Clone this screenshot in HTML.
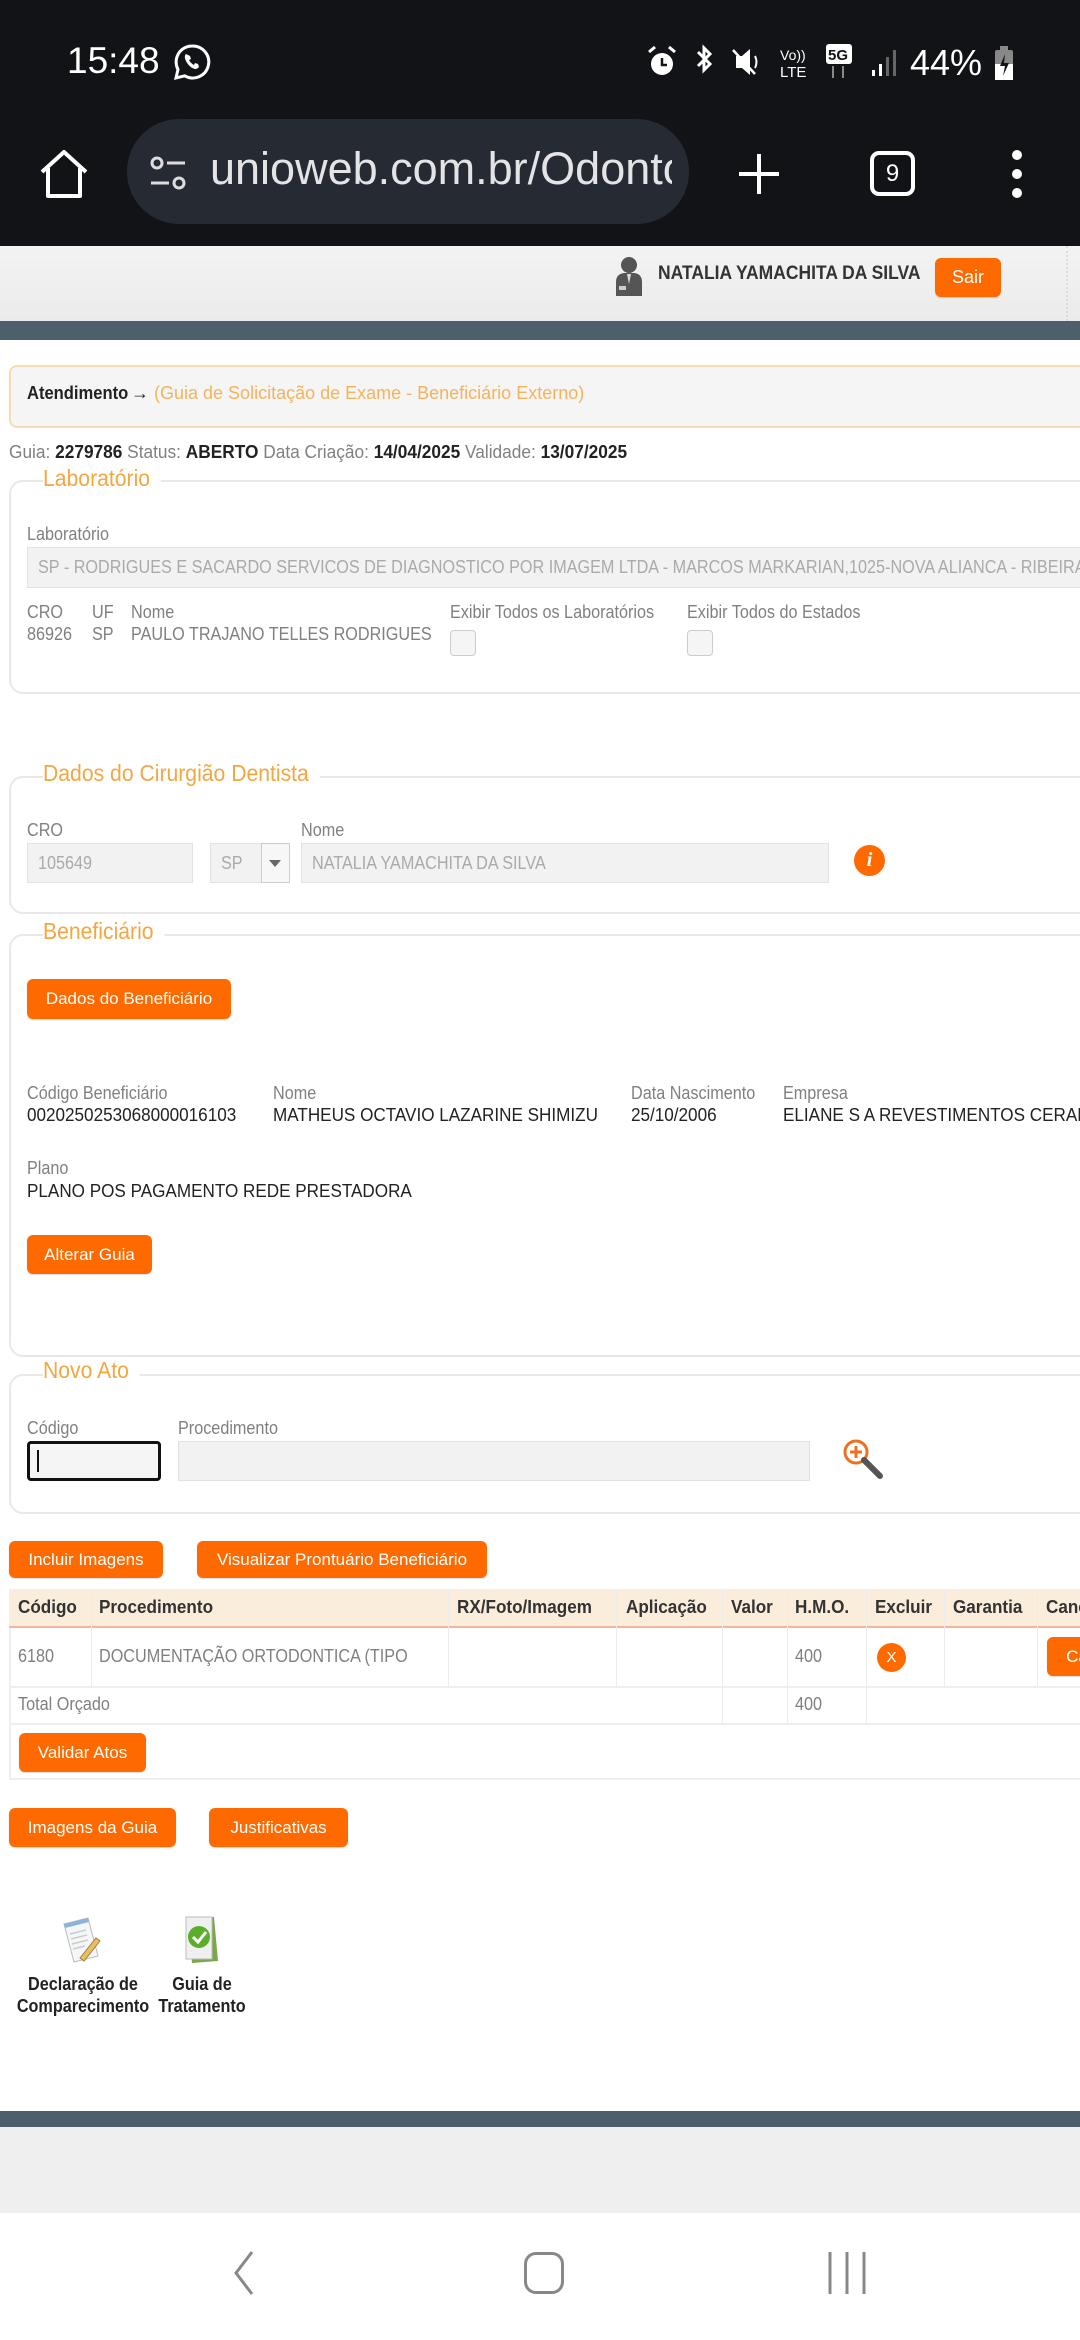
<!DOCTYPE html>
<html><head><meta charset="utf-8">
<style>
*{margin:0;padding:0;box-sizing:border-box}
html,body{overflow:hidden}
body{width:1080px;height:2340px;position:relative;background:#fff;font-family:"Liberation Sans",sans-serif;font-size:18px;color:#808080}
.a{position:absolute;white-space:nowrap;transform-origin:left top}
.l{transform:scaleX(.9)}
.k{transform:scaleX(.95)}
.sb{font-family:"Liberation Sans",sans-serif;color:#fff}
.btn{position:absolute;background:#ff6a00;color:#fff;border-radius:6px;font-size:17px;display:flex;align-items:center;justify-content:center;box-shadow:0 1px 1px rgba(0,0,0,.15);white-space:nowrap}
.fs{position:absolute;left:9px;width:1120px;border:2px solid #e8e8e8;border-radius:14px}
.lg{position:absolute;left:43px;color:#f4a640;font-size:23px;background:#fff;padding:0 12px 0 0;transform:scaleX(.92);transform-origin:left top;white-space:nowrap}
.in{position:absolute;background:#f2f2f2;border:1px solid #e2e2e2;color:#aaa;padding-left:10px;display:flex;align-items:center;white-space:nowrap;overflow:hidden}
.in span{display:inline-block;transform:scaleX(.9);transform-origin:left center}
.d{color:#222}
.th{position:absolute;font-weight:bold;color:#333;top:1597px;white-space:nowrap;transform:scaleX(.95);transform-origin:left top}
.vl{position:absolute;width:1px;background:#ececec}
</style></head><body>
<!-- status + url bar -->
<div class="a" style="left:0;top:0;width:1080px;height:246px;background:#121317"></div>
<div class="a sb" style="left:67px;top:40px;font-size:37px">15:48</div>
<svg class="a" style="left:172px;top:42px" width="40" height="40" viewBox="0 0 40 40"><path d="M20 4a16 16 0 0 0-14 23.5L4 36l8.7-2.2A16 16 0 1 0 20 4z" fill="none" stroke="#fff" stroke-width="3"/><path d="M14 12c-1 1-2 3 0 7s5 7 9 8c2 0 3-1 4-2l-1-3-3-1-1 2c-2-1-4-3-5-5l2-1-1-3z" fill="#fff"/></svg>
<svg class="a" style="left:645px;top:44px" width="340" height="36" viewBox="0 0 340 36">
<circle cx="17" cy="20" r="11" fill="#fff"/><path d="M17 14v7h5" stroke="#121317" stroke-width="2.5" fill="none"/><path d="M4 8l6-5M30 8l-6-5" stroke="#fff" stroke-width="3"/>
<path d="M53 8l12 12-6 6V4l6 6-12 12" stroke="#fff" stroke-width="3" fill="none"/>
<path d="M91 12h6l8-7v26l-8-7h-6z" fill="#fff"/><path d="M88 6l22 24" stroke="#fff" stroke-width="2.5"/><path d="M110 12q3 6 0 12" stroke="#fff" stroke-width="2" fill="none"/>
<text x="135" y="16" font-size="14" fill="#fff" font-family="Liberation Sans">Vo))</text><text x="135" y="33" font-size="15" fill="#fff" font-family="Liberation Sans">LTE</text>
<rect x="181" y="0" width="26" height="20" rx="3" fill="#fff"/><text x="183" y="16" font-size="15" font-weight="bold" fill="#121317" font-family="Liberation Sans">5G</text><path d="M188 22v12M198 22v12" stroke="#888" stroke-width="2"/>
<rect x="227" y="26" width="3" height="6" fill="#fff"/><rect x="234" y="20" width="3" height="12" fill="#fff"/><rect x="241" y="13" width="3" height="19" fill="#666"/><rect x="248" y="6" width="3" height="26" fill="#666"/>
<text x="265" y="31" font-size="36" fill="#fff" font-family="Liberation Sans">44%</text>
</svg>
<svg class="a" style="left:994px;top:46px" width="20" height="34" viewBox="0 0 20 34"><rect x="6" y="0" width="8" height="4" fill="#888"/><rect x="1" y="4" width="18" height="30" rx="2" fill="#888"/><rect x="1" y="18" width="18" height="16" fill="#fff"/><path d="M11 8l-5 12h5l-2 10 6-13h-5z" fill="#121317"/></svg>
<svg class="a" style="left:38px;top:148px" width="52" height="52" viewBox="0 0 52 52"><path d="M4 24L26 4l22 20M10 20v28h32V20" fill="none" stroke="#fff" stroke-width="4" stroke-linejoin="round"/></svg>
<div class="a" style="left:127px;top:119px;width:562px;height:105px;border-radius:52px;background:#252a33"></div>
<svg class="a" style="left:147px;top:153px" width="42" height="42" viewBox="0 0 42 42"><circle cx="10" cy="10" r="5" fill="none" stroke="#ddd" stroke-width="3"/><path d="M20 10h18M4 30h18" stroke="#ddd" stroke-width="3"/><circle cx="32" cy="30" r="5" fill="none" stroke="#ddd" stroke-width="3"/></svg>
<div class="a sb" style="left:210px;top:143px;font-size:45px;color:#e4e4e6;width:462px;overflow:hidden">unioweb.com.br/Odonto</div>
<svg class="a" style="left:737px;top:152px" width="44" height="44"><path d="M22 2v40M2 22h40" stroke="#fff" stroke-width="4"/></svg>
<div class="a" style="left:870px;top:151px;width:45px;height:45px;border:4px solid #fff;border-radius:9px;color:#fff;font-family:'Liberation Sans';font-size:24px;text-align:center;line-height:37px">9</div>
<svg class="a" style="left:1010px;top:148px" width="14" height="52"><circle cx="7" cy="7" r="5" fill="#fff"/><circle cx="7" cy="26" r="5" fill="#fff"/><circle cx="7" cy="45" r="5" fill="#fff"/></svg>

<!-- page header -->
<div class="a" style="left:0;top:246px;width:1080px;height:75px;background:linear-gradient(#f3f3f3,#ebebeb)"></div>
<div class="a" style="left:1066px;top:246px;width:3px;height:75px;border-left:2px dotted #ddd"></div>
<svg class="a" style="left:614px;top:256px" width="30" height="40" viewBox="0 0 30 40"><circle cx="15" cy="9" r="8" fill="#555"/><path d="M2 40V26q0-8 8-9h10q8 1 8 9v14z" fill="#555"/><path d="M13 18l2 10 2-10z" fill="#ddd"/><rect x="5" y="30" width="7" height="4" fill="#ccc"/></svg>
<div class="a" style="left:658px;top:263px;font-weight:bold;color:#333;font-size:19px;transform:scaleX(.92)">NATALIA YAMACHITA DA SILVA</div>
<div class="btn" style="left:935px;top:258px;width:66px;height:39px;font-size:18px">Sair</div>
<div class="a" style="left:0;top:321px;width:1080px;height:19px;background:#4d5f6b"></div>

<!-- breadcrumb -->
<div class="a" style="left:9px;top:365px;width:1100px;height:63px;border:2px solid #f5dcb5;border-radius:8px;background:#f5f5f5"></div>
<div class="a" style="left:27px;top:383px"><b style="color:#222;display:inline-block;transform:scaleX(.92);transform-origin:left">Atendimento</b><span style="color:#222;margin-left:-6px">→</span> <span style="color:#f7b25a">(Guia de Solicitação de Exame - Beneficiário Externo)</span></div>
<div class="a" style="left:9px;top:442px;transform:scaleX(.96)">Guia: <b class="d">2279786</b> Status: <b class="d">ABERTO</b> Data Criação: <b class="d">14/04/2025</b> Validade: <b class="d">13/07/2025</b></div>

<!-- Laboratorio -->
<div class="fs" style="top:480px;height:214px"></div>
<div class="lg" style="top:465px">Laboratório</div>
<div class="a l" style="left:27px;top:524px">Laboratório</div>
<div class="in" style="left:27px;top:547px;width:1080px;height:41px"><span>SP - RODRIGUES E SACARDO SERVICOS DE DIAGNOSTICO POR IMAGEM LTDA - MARCOS MARKARIAN,1025-NOVA ALIANCA - RIBEIRAO PRETO</span></div>
<div class="a l" style="left:27px;top:602px">CRO</div><div class="a l" style="left:92px;top:602px">UF</div><div class="a l" style="left:131px;top:602px">Nome</div>
<div class="a l" style="left:27px;top:624px">86926</div><div class="a l" style="left:92px;top:624px">SP</div><div class="a l" style="left:131px;top:624px">PAULO TRAJANO TELLES RODRIGUES</div>
<div class="a l" style="left:450px;top:602px">Exibir Todos os Laboratórios</div><div class="a l" style="left:687px;top:602px">Exibir Todos do Estados</div>
<div class="a" style="left:450px;top:630px;width:26px;height:26px;border:1px solid #ccc;border-radius:4px;background:#f5f5f5"></div>
<div class="a" style="left:687px;top:630px;width:26px;height:26px;border:1px solid #ccc;border-radius:4px;background:#f5f5f5"></div>

<!-- Dentista -->
<div class="fs" style="top:776px;height:138px"></div>
<div class="lg" style="top:760px">Dados do Cirurgião Dentista</div>
<div class="a l" style="left:27px;top:820px">CRO</div><div class="a l" style="left:301px;top:820px">Nome</div>
<div class="in" style="left:27px;top:843px;width:166px;height:40px"><span>105649</span></div>
<div class="in" style="left:210px;top:843px;width:80px;height:40px"><span>SP</span></div>
<div class="a" style="left:261px;top:843px;width:29px;height:40px;border:1px solid #ccc;background:#f7f7f7"></div>
<svg class="a" style="left:269px;top:860px" width="12" height="8"><path d="M0 0h12L6 7z" fill="#666"/></svg>
<div class="in" style="left:301px;top:843px;width:528px;height:40px"><span>NATALIA YAMACHITA DA SILVA</span></div>
<div class="a" style="left:854px;top:845px;width:31px;height:31px;border-radius:50%;background:#ff6a00;color:#fff;font:italic bold 20px 'Liberation Serif',serif;text-align:center;line-height:31px">i</div>

<!-- Beneficiario -->
<div class="fs" style="top:934px;height:423px"></div>
<div class="lg" style="top:918px">Beneficiário</div>
<div class="btn" style="left:27px;top:979px;width:204px;height:40px">Dados do Beneficiário</div>
<div class="a l" style="left:27px;top:1083px">Código Beneficiário</div><div class="a l" style="left:273px;top:1083px">Nome</div><div class="a l" style="left:631px;top:1083px">Data Nascimento</div><div class="a l" style="left:783px;top:1083px">Empresa</div>
<div class="a d k" style="left:27px;top:1105px">0020250253068000016103</div><div class="a d k" style="left:273px;top:1105px">MATHEUS OCTAVIO LAZARINE SHIMIZU</div><div class="a d k" style="left:631px;top:1105px">25/10/2006</div><div class="a d k" style="left:783px;top:1105px">ELIANE S A REVESTIMENTOS CERAMICOS</div>
<div class="a l" style="left:27px;top:1158px">Plano</div>
<div class="a d k" style="left:27px;top:1181px">PLANO POS PAGAMENTO REDE PRESTADORA</div>
<div class="btn" style="left:27px;top:1235px;width:125px;height:39px">Alterar Guia</div>

<!-- Novo Ato -->
<div class="fs" style="top:1374px;height:140px"></div>
<div class="lg" style="top:1357px">Novo Ato</div>
<div class="a l" style="left:27px;top:1418px">Código</div><div class="a l" style="left:178px;top:1418px">Procedimento</div>
<div class="a" style="left:27px;top:1441px;width:134px;height:40px;border:3px solid #111;border-radius:4px;background:#f5f5f5"></div>
<div class="a" style="left:37px;top:1450px;width:2px;height:22px;background:#111"></div>
<div class="in" style="left:178px;top:1441px;width:632px;height:40px"></div>
<svg class="a" style="left:842px;top:1438px" width="42" height="42" viewBox="0 0 42 42"><circle cx="14" cy="14" r="11" fill="#fff" stroke="#f07020" stroke-width="3"/><path d="M14 8v12M8 14h12" stroke="#f07020" stroke-width="3"/><path d="M22 22l16 16" stroke="#555" stroke-width="6" stroke-linecap="round"/></svg>

<!-- buttons -->
<div class="btn" style="left:9px;top:1541px;width:154px;height:37px">Incluir Imagens</div>
<div class="btn" style="left:197px;top:1541px;width:290px;height:37px">Visualizar Prontuário Beneficiário</div>

<!-- table -->
<div class="a" style="left:9px;top:1589px;width:1100px;height:191px;border:2px solid #eee;border-top:0"></div>
<div class="a" style="left:9px;top:1589px;width:1100px;height:39px;background:#fbeddc;border-bottom:2px solid #f2b69a"></div>
<div class="a" style="left:9px;top:1686px;width:1100px;height:2px;background:#eee"></div>
<div class="a" style="left:9px;top:1723px;width:1100px;height:2px;background:#eee"></div>
<div class="vl" style="left:91px;top:1589px;height:97px"></div>
<div class="vl" style="left:448px;top:1589px;height:97px"></div>
<div class="vl" style="left:616px;top:1589px;height:97px"></div>
<div class="vl" style="left:722px;top:1589px;height:134px"></div>
<div class="vl" style="left:787px;top:1589px;height:134px"></div>
<div class="vl" style="left:866px;top:1589px;height:134px"></div>
<div class="vl" style="left:944px;top:1589px;height:97px"></div>
<div class="vl" style="left:1037px;top:1589px;height:97px"></div>
<div class="th" style="left:18px">Código</div><div class="th" style="left:99px">Procedimento</div><div class="th" style="left:457px">RX/Foto/Imagem</div><div class="th" style="left:626px">Aplicação</div><div class="th" style="left:731px">Valor</div><div class="th" style="left:795px">H.M.O.</div><div class="th" style="left:875px">Excluir</div><div class="th" style="left:953px">Garantia</div><div class="th" style="left:1046px">Cancelar</div>
<div class="a l" style="left:18px;top:1646px">6180</div><div class="a l" style="left:99px;top:1646px">DOCUMENTAÇÃO ORTODONTICA (TIPO</div><div class="a l" style="left:795px;top:1646px">400</div>
<div class="a" style="left:877px;top:1643px;width:29px;height:29px;border-radius:50%;background:#ff6a00;color:#fff;font-size:15px;text-align:center;line-height:29px">X</div>
<div class="btn" style="left:1047px;top:1637px;width:60px;height:39px">Ca</div>
<div class="a l" style="left:18px;top:1694px">Total Orçado</div><div class="a l" style="left:795px;top:1694px">400</div>
<div class="btn" style="left:19px;top:1733px;width:127px;height:39px">Validar Atos</div>

<div class="btn" style="left:9px;top:1808px;width:167px;height:39px">Imagens da Guia</div>
<div class="btn" style="left:209px;top:1808px;width:139px;height:39px">Justificativas</div>

<!-- icons -->
<svg class="a" style="left:60px;top:1916px" width="46" height="48" viewBox="0 0 46 48"><path d="M4 8l24-6 10 38-24 6z" fill="#f4f6f8" stroke="#bbb"/><path d="M4 8l24-6 1 4-24 6z" fill="#8ab4d8"/><path d="M10 18l16-4M11 23l16-4M12 28l16-4M13 33l12-3" stroke="#ccc" stroke-width="1.5"/><path d="M20 42l16-20 4 3-16 20z" fill="#e8c060" stroke="#a08040"/></svg>
<svg class="a" style="left:180px;top:1913px" width="44" height="52" viewBox="0 0 44 52"><path d="M8 6l26-2 4 44-26 2z" fill="#7aa84a"/><path d="M6 4h26v42H6z" fill="#f0f0f0" stroke="#bbb"/><circle cx="19" cy="24" r="11" fill="#5cae2a"/><path d="M13 24l5 5 8-10" stroke="#fff" stroke-width="3" fill="none"/></svg>
<div class="a" style="left:6px;top:1973px;width:154px;text-align:center;font-weight:bold;color:#222;line-height:22px;transform:scaleX(.9);transform-origin:center top">Declaração de<br>Comparecimento</div>
<div class="a" style="left:150px;top:1973px;width:104px;text-align:center;font-weight:bold;color:#222;line-height:22px;transform:scaleX(.9);transform-origin:center top">Guia de<br>Tratamento</div>

<!-- footer -->
<div class="a" style="left:0;top:2111px;width:1080px;height:16px;background:#4d5f6b"></div>
<div class="a" style="left:0;top:2127px;width:1080px;height:86px;background:#efefef"></div>
<div class="a" style="left:0;top:2213px;width:1080px;height:127px;background:#fff"></div>
<svg class="a" style="left:228px;top:2250px" width="30" height="46"><path d="M24 2L8 23l16 21" stroke="#888" stroke-width="3" fill="none"/></svg>
<div class="a" style="left:524px;top:2252px;width:40px;height:42px;border:3px solid #888;border-radius:12px"></div>
<svg class="a" style="left:825px;top:2250px" width="44" height="46"><path d="M5 2v42M22 2v42M39 2v42" stroke="#888" stroke-width="3"/></svg>
</body></html>
